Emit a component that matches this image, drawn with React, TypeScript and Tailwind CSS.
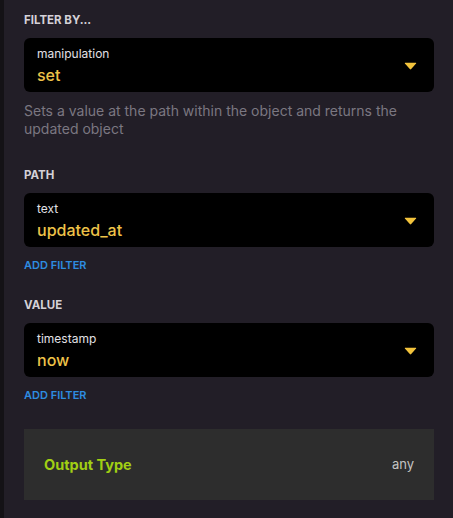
import React from 'react';

type SelectProps = { kind: string; value: string };

function SelectBox({ kind, value }: SelectProps) {
  return (
    <div className="h-[54px] bg-black rounded-md flex items-center justify-between pl-[13px] pr-[17px]">
      <div className="flex flex-col">
        <span className="text-[12px] leading-4 text-[#e2e0e6]">{kind}</span>
        <span className="text-[16px] leading-5 mt-[3px] font-medium text-[#eec349]">{value}</span>
      </div>
      <svg width="13" height="8" viewBox="0 0 13 8" className="mt-[2px]">
        <path d="M1.2 0.8 L11.8 0.8 Q12.6 0.8 12.1 1.6 L7.2 7.1 Q6.5 7.8 5.8 7.1 L0.9 1.6 Q0.4 0.8 1.2 0.8 Z" fill="#f2c33c" />
      </svg>
    </div>
  );
}

function SectionLabel({ children }: { children: React.ReactNode }) {
  return (
    <h3 className="text-[11.5px] leading-4 font-bold uppercase text-[#d4d1d8] mb-[10px]">{children}</h3>
  );
}

function AddFilter() {
  return (
    <button className="mt-[11px] text-[11px] leading-[14px] font-semibold uppercase text-[#2e8ce0] text-left">
      Add Filter
    </button>
  );
}

export default function App() {
  return (
    <div className="flex min-h-[518px] w-[453px] bg-[#221e27]" style={{ fontFamily: 'Inter, "Noto Sans", sans-serif' }}>
      {/* left edge of neighbouring pane */}
      <div className="w-[4px] shrink-0 bg-[#141216]" />

      <div className="flex-1 pl-[20px] pr-[19px] pt-[12px] pb-[18px] flex flex-col">
        {/* Filter by */}
        <SectionLabel>Filter by...</SectionLabel>
        <SelectBox kind="manipulation" value="set" />
        <p className="mt-[10px] text-[14px] leading-[18px] text-[#7b7781]">
          Sets a value at the path within the object and returns the updated object
        </p>

        {/* Path */}
        <div className="mt-[29px] flex flex-col">
          <SectionLabel>Path</SectionLabel>
          <SelectBox kind="text" value="updated_at" />
          <AddFilter />
        </div>

        {/* Value */}
        <div className="mt-[25px] flex flex-col">
          <SectionLabel>Value</SectionLabel>
          <SelectBox kind="timestamp" value="now" />
          <AddFilter />
        </div>

        {/* Output type */}
        <div className="mt-[27px] h-[71px] bg-[#2d2d2d] flex items-center justify-between px-5">
          <span className="text-[14.5px] font-bold text-[#a1cf14]">Output Type</span>
          <span className="text-[13px] text-[#c4c4c4]">any</span>
        </div>
      </div>
    </div>
  );
}
